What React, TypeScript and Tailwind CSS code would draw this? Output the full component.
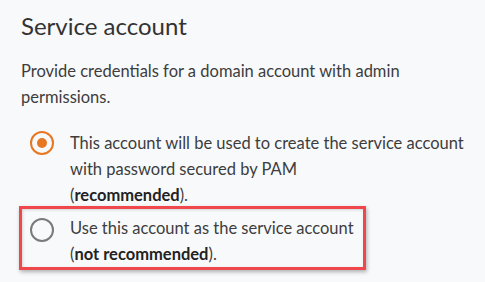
export default function App() {
  return (
    <div
      className="w-[485px] h-[282px] bg-[#f8f9fb] text-[#3d3d3d] overflow-hidden pl-[21px]"
      style={{ fontFamily: "Lato, 'Noto Sans', sans-serif" }}
    >
      <h1 className="pt-[11px] text-[24px] leading-[30px] font-normal text-[#333]">Service account</h1>
      <p className="mt-[17px] text-[16.5px] leading-[26px]">
        Provide credentials for a domain account with admin
        <br />
        permissions.
      </p>
      <div className="mt-[20px] flex pl-[9px]">
        <div className="mt-[1px] w-[24px] h-[24px] shrink-0 rounded-full border-2 border-[#e87722] flex items-center justify-center">
          <div className="w-[10px] h-[10px] rounded-full bg-[#e87722]" />
        </div>
        <p className="ml-[16px] text-[16.5px] leading-[26px]">
          This account will be used to create the service account
          <br />
          with password secured by PAM
          <br />
          (<b className="font-bold text-[#222]">recommended</b>).
        </p>
      </div>
      <div className="mt-[-2px] -ml-[2px] w-[347px] h-[64px] border-[3px] border-[#f0474c] shadow-[1px_2px_4px_rgba(0,0,0,0.3),inset_1px_1px_3px_rgba(0,0,0,0.15)] flex pl-[8px] pt-[6px]">
        <div className="mt-[3px] w-[24px] h-[24px] shrink-0 rounded-full border-2 border-[#7a7a7a]" />
        <p className="ml-[16px] text-[16.5px] leading-[26px]">
          Use this account as the service account
          <br />
          (<b className="font-bold text-[#222]">not recommended</b>).
        </p>
      </div>
    </div>
  );
}
